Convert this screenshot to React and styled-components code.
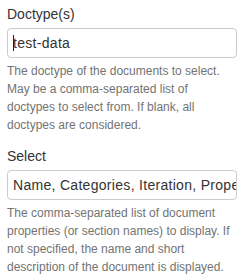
import React from "react";
import styled, {createGlobalStyle} from "styled-components";

const GlobalStyle = createGlobalStyle`
    body {
        margin: 0;
        background: #FFFFFF;
        font-family: "Liberation Sans", Arial, sans-serif;
        color: #333333;
    }
`

const Page = styled.div`
    width: 248px;
    height: 280px;
    padding: 4px 11px 0 7px;
    box-sizing: border-box;
    overflow: hidden;
`

const FormGroup = styled.div`
    display: flex;
    flex-direction: column;
    margin-bottom: ${props => props.last ? "0" : "12px"};
`

const Label = styled.label`
    font-size: 14px;
    line-height: 20px;
    margin-bottom: 4px;
`

const Field = styled.div`
    height: 30px;
    box-sizing: border-box;
    border: 1px solid #CCCCCC;
    border-radius: 4px;
    padding: 0 5px;
    display: flex;
    align-items: center;
    font-size: 14px;
    letter-spacing: 0.3px;
    color: #333333;
    white-space: nowrap;
    overflow: hidden;
`

const Caret = styled.span`
    display: inline-block;
    width: 1px;
    height: 16px;
    background: #222222;
    margin-right: -1px;
`

const Help = styled.p`
    margin: 4px 0 0;
    font-size: 12px;
    line-height: 18px;
    color: #737373;
`

export default function App() {
    return <>
        <GlobalStyle />
        <Page>
            <FormGroup>
                <Label>Doctype(s)</Label>
                <Field><Caret />test-data</Field>
                <Help>The doctype of the documents to select. May be a comma-separated list of doctypes to select from. If blank, all doctypes are considered.</Help>
            </FormGroup>
            <FormGroup last>
                <Label>Select</Label>
                <Field>Name, Categories, Iteration, Properties</Field>
                <Help>The comma-separated list of document properties (or section names) to display. If not specified, the name and short description of the document is displayed.</Help>
            </FormGroup>
        </Page>
    </>
}
